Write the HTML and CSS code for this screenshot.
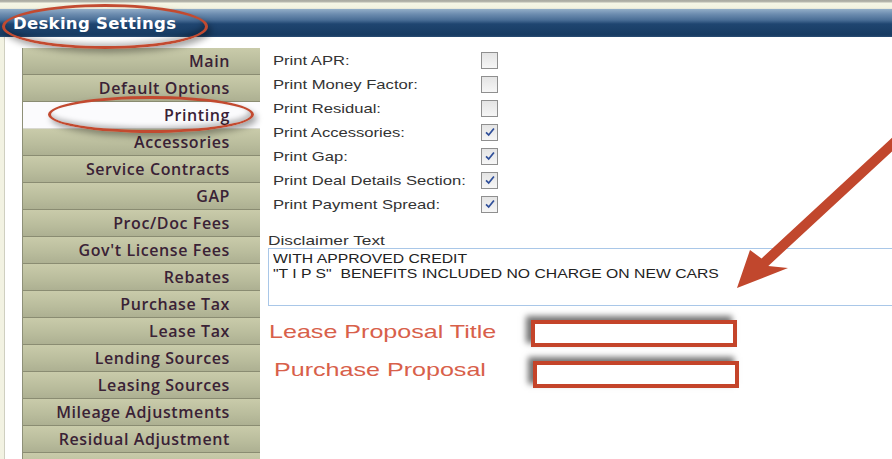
FILE: index.html
```html
<!DOCTYPE html>
<html>
<head>
<meta charset="utf-8">
<link rel="stylesheet" href="styles.css">
</head>
<body>
<div class="page">
  <div class="topstrip"></div>
  <header class="titlebar"><span class="title">Desking Settings</span></header>
  <div class="layout">
    <div class="leftedge"></div>
    <nav class="sidebar">
      <div class="tab">Main</div>
      <div class="tab">Default Options</div>
      <div class="tab active">Printing</div>
      <div class="tab">Accessories</div>
      <div class="tab">Service Contracts</div>
      <div class="tab">GAP</div>
      <div class="tab">Proc/Doc Fees</div>
      <div class="tab">Gov't License Fees</div>
      <div class="tab">Rebates</div>
      <div class="tab">Purchase Tax</div>
      <div class="tab">Lease Tax</div>
      <div class="tab">Lending Sources</div>
      <div class="tab">Leasing Sources</div>
      <div class="tab">Mileage Adjustments</div>
      <div class="tab">Residual Adjustment</div>
      <div class="tab"></div>
    </nav>
    <main class="content">
      <div class="checks">
        <div class="row"><span class="label"><span class="stretch">Print APR:</span></span><span class="cb"></span></div>
        <div class="row"><span class="label"><span class="stretch">Print Money Factor:</span></span><span class="cb"></span></div>
        <div class="row"><span class="label"><span class="stretch">Print Residual:</span></span><span class="cb"></span></div>
        <div class="row"><span class="label"><span class="stretch">Print Accessories:</span></span><span class="cb checked"><svg viewBox="0 0 16 16" width="14" height="14"><path d="M3.5 8.5 L6.5 11.5 L12.5 4" fill="none" stroke="#2f4f9a" stroke-width="2"/></svg></span></div>
        <div class="row"><span class="label"><span class="stretch">Print Gap:</span></span><span class="cb checked"><svg viewBox="0 0 16 16" width="14" height="14"><path d="M3.5 8.5 L6.5 11.5 L12.5 4" fill="none" stroke="#2f4f9a" stroke-width="2"/></svg></span></div>
        <div class="row"><span class="label"><span class="stretch">Print Deal Details Section:</span></span><span class="cb checked"><svg viewBox="0 0 16 16" width="14" height="14"><path d="M3.5 8.5 L6.5 11.5 L12.5 4" fill="none" stroke="#2f4f9a" stroke-width="2"/></svg></span></div>
        <div class="row"><span class="label"><span class="stretch">Print Payment Spread:</span></span><span class="cb checked"><svg viewBox="0 0 16 16" width="14" height="14"><path d="M3.5 8.5 L6.5 11.5 L12.5 4" fill="none" stroke="#2f4f9a" stroke-width="2"/></svg></span></div>
      </div>
      <div class="disclaimer">
        <div class="dlabel"><span class="dstretch">Disclaimer Text</span></div>
        <div class="dbox"><span class="tstretch">WITH APPROVED CREDIT<br>"T I P S"&nbsp; BENEFITS INCLUDED NO CHARGE ON NEW CARS</span></div>
      </div>
      <div class="proposal lease">
        <span class="plabel"><span class="pstretch">Lease Proposal Title</span></span>
        <span class="pbox"></span>
      </div>
      <div class="proposal purchase">
        <span class="plabel"><span class="pstretch">Purchase Proposal</span></span>
        <span class="pbox"></span>
      </div>
    </main>
  </div>
  <div class="ring ring-title"></div>
  <div class="ring ring-tab"></div>
  <svg class="arrow" width="892" height="459" viewBox="0 0 892 459">
    <polygon points="893.6,136.3 761.5,258.5 750,250 737,288 788,268 768.3,265.9 900.4,143.7" fill="#c1472d"/>
  </svg>
</div>
</body>
</html>
```
FILE: styles.css
```css
html, body {
  margin: 0;
  padding: 0;
  background: #ffffff;
}
.page {
  position: relative;
  width: 892px;
  height: 459px;
  overflow: hidden;
  background: #ffffff;
}
.topstrip {
  height: 9px;
  background: linear-gradient(#a9a9a0 0, #b8b8ae 2px, #f6f6e6 3px, #f2f2e0 8px, #e0e0d4 9px);
}
.titlebar {
  height: 28px;
  background: linear-gradient(#93aec8 0, #6d8db0 5px, #4a6e96 11px, #1f4570 15px, #173b62 26px, #2a4d74 28px);
  display: flex;
  align-items: center;
  padding-left: 13px;
}
.title {
  font-family: "DejaVu Sans", sans-serif;
  font-weight: bold;
  font-size: 16.5px;
  color: #ffffff;
  letter-spacing: 0.3px;
}
.layout {
  display: flex;
  padding-top: 11px;
}
.leftedge {
  flex-shrink: 0;
  width: 4px;
  margin-right: 17px;
  background: #f2f2e2;
  border-right: 1px solid #cfcfc0;
  margin-top: -11px;
  height: 430px;
}
.sidebar {
  flex-shrink: 0;
  width: 237px;
  display: flex;
  flex-direction: column;
  border-left: 1px solid #8e9078;
}
.tab {
  height: 25px;
  padding-top: 1px;
  border-bottom: 1px solid #8a8c72;
  background: linear-gradient(#c9cbaa, #b9bc9c 60%, #adb092);
  font-family: "Open Sans", sans-serif;
  font-weight: 600;
  font-size: 16px;
  letter-spacing: 0.6px;
  color: #3a2236;
  text-align: right;
  padding-right: 30px;
  line-height: 25px;
}
.tab.active {
  background: #fbfbfd;
  border-bottom-color: #d8d8d0;
}
.content {
  flex: 1;
  min-width: 0;
  padding-left: 13px;
  font-family: "Liberation Sans", Arial, sans-serif;
}
.checks {
  display: flex;
  flex-direction: column;
}
.row {
  height: 24px;
  display: flex;
  align-items: center;
}
.label {
  width: 208px;
  font-size: 13.5px;
  color: #333333;
}
.stretch, .dstretch, .tstretch, .pstretch {
  display: inline-block;
  transform-origin: left center;
  white-space: nowrap;
}
.stretch { transform: scaleX(1.23); }
.dstretch { transform: scaleX(1.28); }
.tstretch { transform: scaleX(1.21); transform-origin: left top; }
.pstretch { transform: scaleX(1.32); }
.cb {
  width: 15px;
  height: 15px;
  border: 1px solid #8f8f8f;
  background: linear-gradient(#e4e4e4, #f6f6f6);
  display: flex;
  align-items: center;
  justify-content: center;
}
.disclaimer {
  margin-left: -5px;
  margin-top: 17px;
}
.dlabel {
  font-size: 13.5px;
  color: #333;
  line-height: 15px;
}
.dbox {
  height: 50px;
  width: 640px;
  border: 1px solid #a9c7e8;
  padding: 2px 4px 4px;
  font-size: 13px;
  line-height: 15px;
  color: #222;
}
.proposal {
  display: flex;
  align-items: center;
}
.plabel {
  font-size: 19px;
  color: #d8604a;
}
.lease {
  margin-top: 14px;
  margin-left: -4px;
}
.lease .plabel { width: 262px; padding-bottom: 4px; }
.purchase {
  margin-top: 12px;
  margin-left: 1px;
}
.purchase .plabel { width: 259px; padding-bottom: 8px; }
.pbox {
  width: 198px;
  height: 19px;
  border: 4px solid #c4442a;
  background: #fff;
  box-shadow: -5px -4px 6px rgba(0,0,0,0.55);
}
.ring {
  position: absolute;
  border: 3px solid #c24a30;
  border-radius: 50%;
  box-shadow: 3px 4px 6px rgba(0,0,0,0.35), inset -2px -3px 5px rgba(0,0,0,0.25);
}
.ring-title {
  left: 2px;
  top: 4px;
  width: 200px;
  height: 39px;
}
.ring-tab {
  left: 48px;
  top: 96px;
  width: 200px;
  height: 31px;
}
.arrow {
  position: absolute;
  left: 0;
  top: 0;
  pointer-events: none;
}
```
